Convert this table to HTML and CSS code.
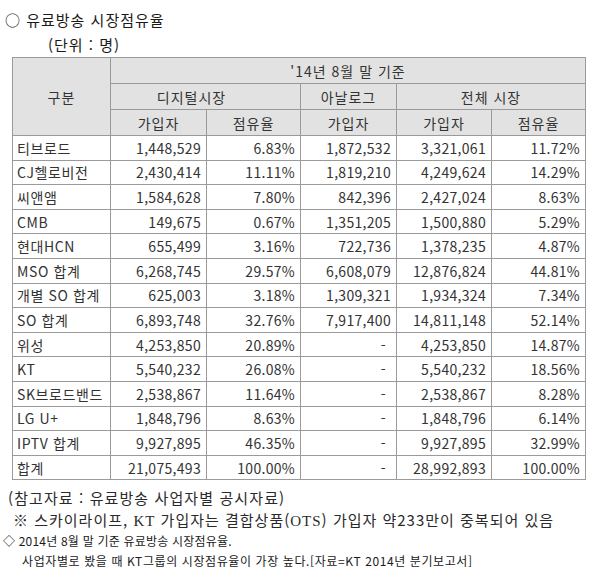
FILE: index.html
```html
<!DOCTYPE html>
<html lang="ko">
<head>
<meta charset="utf-8">
<title>유료방송 시장점유율</title>
<link rel="stylesheet" href="styles.css">
</head>
<body>
<div class="page">
  <p class="title">○ 유료방송 시장점유율</p>
  <p class="unit">(단위 : 명)</p>
  <table class="share">
    <colgroup>
      <col class="c1"><col class="c2"><col class="c3"><col class="c4"><col class="c5"><col class="c6">
    </colgroup>
    <thead>
      <tr class="h1">
        <th rowspan="3">구분</th>
        <th colspan="5">'14년 8월 말 기준</th>
      </tr>
      <tr class="h2">
        <th colspan="2" class="digital">디지털시장</th>
        <th>아날로그</th>
        <th colspan="2">전체 시장</th>
      </tr>
      <tr class="h3">
        <th>가입자</th><th>점유율</th><th>가입자</th><th>가입자</th><th>점유율</th>
      </tr>
    </thead>
    <tbody>
      <tr><td>티브로드</td><td>1,448,529</td><td>6.83%</td><td>1,872,532</td><td>3,321,061</td><td>11.72%</td></tr>
      <tr><td>CJ헬로비전</td><td>2,430,414</td><td>11.11%</td><td>1,819,210</td><td>4,249,624</td><td>14.29%</td></tr>
      <tr><td>씨앤앰</td><td>1,584,628</td><td>7.80%</td><td>842,396</td><td>2,427,024</td><td>8.63%</td></tr>
      <tr><td>CMB</td><td>149,675</td><td>0.67%</td><td>1,351,205</td><td>1,500,880</td><td>5.29%</td></tr>
      <tr><td>현대HCN</td><td>655,499</td><td>3.16%</td><td>722,736</td><td>1,378,235</td><td>4.87%</td></tr>
      <tr><td>MSO 합계</td><td>6,268,745</td><td>29.57%</td><td>6,608,079</td><td>12,876,824</td><td>44.81%</td></tr>
      <tr><td>개별 SO 합계</td><td>625,003</td><td>3.18%</td><td>1,309,321</td><td>1,934,324</td><td>7.34%</td></tr>
      <tr><td>SO 합계</td><td>6,893,748</td><td>32.76%</td><td>7,917,400</td><td>14,811,148</td><td>52.14%</td></tr>
      <tr><td>위성</td><td>4,253,850</td><td>20.89%</td><td class="dash">-</td><td>4,253,850</td><td>14.87%</td></tr>
      <tr><td>KT</td><td>5,540,232</td><td>26.08%</td><td class="dash">-</td><td>5,540,232</td><td>18.56%</td></tr>
      <tr><td>SK브로드밴드</td><td>2,538,867</td><td>11.64%</td><td class="dash">-</td><td>2,538,867</td><td>8.28%</td></tr>
      <tr><td>LG U+</td><td>1,848,796</td><td>8.63%</td><td class="dash">-</td><td>1,848,796</td><td>6.14%</td></tr>
      <tr><td>IPTV 합계</td><td>9,927,895</td><td>46.35%</td><td class="dash">-</td><td>9,927,895</td><td>32.99%</td></tr>
      <tr><td>합계</td><td>21,075,493</td><td>100.00%</td><td class="dash">-</td><td>28,992,893</td><td>100.00%</td></tr>
    </tbody>
  </table>
  <p class="note1">(참고자료 : 유료방송 사업자별 공시자료)</p>
  <p class="note2">※ 스카이라이프, <span class="serif">KT</span> 가입자는 결합상품(<span class="serif">OTS</span>) 가입자 약233만이 중복되어 있음</p>
  <p class="cap1">◇ 2014년 8월 말 기준 유료방송 시장점유율.</p>
  <p class="cap2">사업자별로 봤을 때 KT그룹의 시장점유율이 가장 높다.[자료=KT 2014년 분기보고서]</p>
</div>
</body>
</html>
```

FILE: styles.css
```css
html, body {
  margin: 0;
  padding: 0;
  background: #ffffff;
}

body {
  font-family: "Noto Sans CJK KR", "Noto Sans", sans-serif;
  color: #222222;
  width: 601px;
  height: 568px;
  overflow: hidden;
}

.page {
  padding-top: 10px;
}

p {
  margin: 0;
  white-space: nowrap;
}

.title {
  font-size: 15px;
  line-height: 20px;
  padding-left: 5px;
  color: #1a1a1a;
  letter-spacing: 1px;
}

.unit {
  font-size: 15px;
  line-height: 22px;
  margin-top: 4px;
  padding-left: 48px;
  color: #1a1a1a;
  letter-spacing: 1px;
}

.share {
  margin-top: 1px;
  margin-left: 12px;
  width: 573px;
  border-collapse: collapse;
  table-layout: fixed;
  border: 1px solid #3c3c3c;
  font-size: 14px;
  color: #333333;
}

.c1 { width: 98px; }
.c2 { width: 96px; }
.c3 { width: 94px; }
.c4 { width: 96px; }
.c5 { width: 95px; }
.c6 { width: 94px; }

.share th,
.share td {
  border: 1px solid #9a9a9a;
  padding: 0 5px;
  line-height: 16px;
  white-space: nowrap;
  overflow: hidden;
}

.share th {
  background: #e2e2e2;
  font-weight: normal;
  text-align: center;
  letter-spacing: 1px;
}

.share th.digital {
  padding-right: 33px;
}

.share .h1 { height: 26px; }
.share .h2 { height: 26px; }
.share .h3 { height: 26px; }

.share tbody tr { height: 24.6px; }

.share td {
  text-align: right;
  letter-spacing: 0.3px;
}

.share td:first-child {
  text-align: left;
  padding-left: 4px;
  letter-spacing: 0.6px;
}

.share td.dash {
  padding-right: 10px;
}

.note1 {
  font-size: 15px;
  line-height: 22px;
  margin-top: 7px;
  padding-left: 8px;
  color: #2a2a2a;
  letter-spacing: 1.1px;
}

.note2 {
  font-size: 15px;
  line-height: 22px;
  padding-left: 13px;
  color: #2a2a2a;
  letter-spacing: 1px;
}

.serif {
  font-family: "Liberation Serif", serif;
}

.cap1 {
  font-size: 12px;
  line-height: 18px;
  padding-left: 3px;
  color: #1a1a1a;
  letter-spacing: 0.2px;
}

.cap2 {
  font-size: 12px;
  line-height: 22px;
  padding-left: 22px;
  color: #1a1a1a;
  letter-spacing: 0.6px;
}
```
